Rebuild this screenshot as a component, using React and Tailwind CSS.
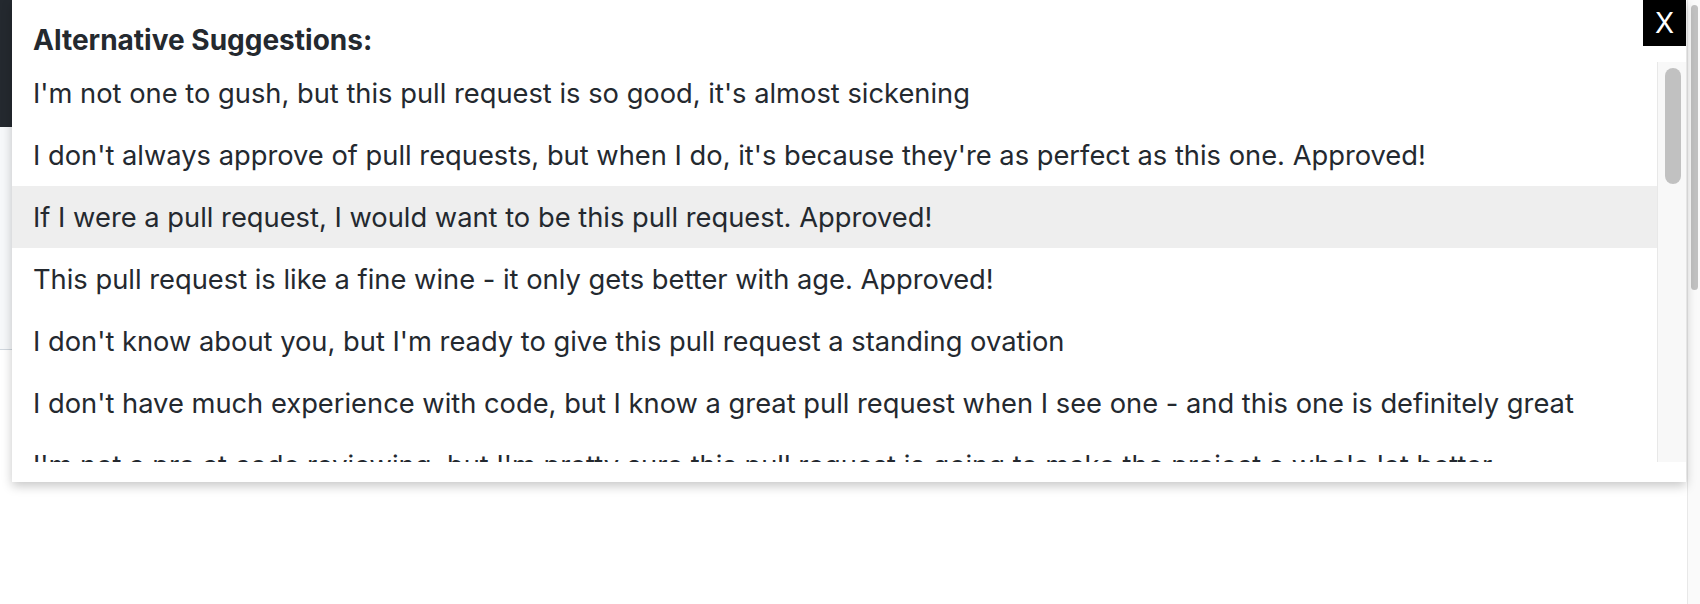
const suggestions = [
  "I'm not one to gush, but this pull request is so good, it's almost sickening",
  "I don't always approve of pull requests, but when I do, it's because they're as perfect as this one. Approved!",
  "If I were a pull request, I would want to be this pull request. Approved!",
  "This pull request is like a fine wine - it only gets better with age. Approved!",
  "I don't know about you, but I'm ready to give this pull request a standing ovation",
  "I don't have much experience with code, but I know a great pull request when I see one - and this one is definitely great",
  "I'm not a pro at code reviewing, but I'm pretty sure this pull request is going to make the project a whole lot better",
];

function SuggestionRow({ text, active }) {
  return (
    <div className={"flex h-[62px] shrink-0 items-center whitespace-nowrap px-[21px] pt-[2px] " + (active ? "bg-[#eeeeee]" : "bg-white")}>
      {text}
    </div>
  );
}

export default function App() {
  return (
    <div className="relative h-[604px] w-[1700px] overflow-hidden bg-white font-['Inter',sans-serif] text-[#24292f]">
      {/* page behind the popup */}
      <div className="flex h-full">
        <div className="flex w-[12px] flex-col">
          <div className="h-[127px] bg-[#24292f]" />
          <div className="h-[223px] border-b border-[#d0d7de] bg-[#f6f8fa]" />
          <div className="flex-1 bg-white" />
        </div>
        <div className="flex-1" />
        <div className="flex w-[13px] flex-col border-l border-[#e8e8e8] bg-[#fafafa] px-[3px] pt-[5px]">
          <div className="ml-auto h-[285px] w-[7px] rounded-full bg-[#c1c1c1]" />
        </div>
      </div>

      {/* popup */}
      <div className="absolute left-[12px] top-0 flex h-[482px] w-[1674px] flex-col bg-white shadow-[0_4px_10px_rgba(0,0,0,0.22)]">
        <div className="flex h-[62px] shrink-0 items-end pb-[8px] pl-[21px] text-[28px] font-bold leading-none">
          Alternative Suggestions:
        </div>
        <div className="flex h-[400px] shrink-0">
          <div className="flex flex-1 flex-col overflow-hidden text-[27.3px]">
            {suggestions.map((s, i) => (
              <SuggestionRow key={i} text={s} active={i === 2} />
            ))}
          </div>
          <div className="w-[29px] border-l border-[#e8e8e8] bg-[#f8f8f8] px-[7px] pt-[6px]">
            <div className="h-[116px] w-[16px] rounded-full bg-[#c1c1c1]" />
          </div>
        </div>
        <button className="absolute right-0 top-0 flex h-[46px] w-[43px] items-center justify-center bg-black text-[28px] leading-none text-white">
          X
        </button>
      </div>
    </div>
  );
}
